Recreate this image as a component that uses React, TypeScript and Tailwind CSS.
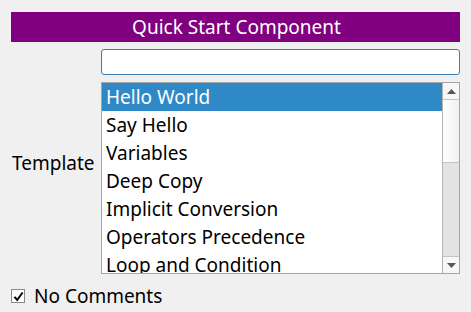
import { useState } from "react";

const templates = [
  "Hello World",
  "Say Hello",
  "Variables",
  "Deep Copy",
  "Implicit Conversion",
  "Operators Precedence",
  "Loop and Condition",
  "Functions",
  "Classes",
];

const font = { fontFamily: '"Noto Sans", "Open Sans", sans-serif' };

const App = () => {
  const [selected, setSelected] = useState(0);
  const [noComments, setNoComments] = useState(true);

  return (
    <div
      className="w-[471px] h-[312px] bg-[#f0f0f0] px-[11px] pt-[12px] text-black overflow-hidden"
      style={font}
    >
      <div className="h-[30px] bg-[#800080] text-white text-[19px] leading-[30px] text-center pl-[2px]">
        Quick Start Component
      </div>

      <div className="grid grid-cols-[90px_1fr] grid-rows-[26px_192px] gap-y-[7px] mt-[7px]">
        <div className="row-span-2 flex items-center text-[19px] pl-[1px] pt-[3px]">
          Template
        </div>
        <input
          className="h-[26px] w-full bg-white border border-[#3a7fb5] rounded-[3px] outline-none px-1 text-[16px]"
          defaultValue=""
        />
        <div className="flex h-[192px] bg-white border border-[#a6a6a6]">
          <ul className="flex-1 overflow-hidden">
            {templates.map((t, i) => (
              <li
                key={t}
                onClick={() => setSelected(i)}
                className={
                  "h-[28px] leading-[29px] pl-[4px] text-[19px] whitespace-nowrap " +
                  (i === selected ? "bg-[#2f89c7] text-white" : "text-black")
                }
              >
                {t}
              </li>
            ))}
          </ul>
          <div className="w-[17px] flex flex-col border-l border-[#b4b4b4] bg-[#e3e3e3]">
            <div className="h-[17px] bg-[#f7f7f7] border-b border-[#c4c4c4] flex items-center justify-center">
              <svg width="9" height="5" viewBox="0 0 9 5">
                <path d="M4.5 0L9 5H0z" fill="#555" />
              </svg>
            </div>
            <div className="h-[63px] bg-gradient-to-r from-white to-[#f0f0f0] border-b border-[#c4c4c4]" />
            <div className="flex-1" />
            <div className="h-[17px] bg-[#f7f7f7] border-t border-[#c4c4c4] flex items-center justify-center">
              <svg width="9" height="5" viewBox="0 0 9 5">
                <path d="M0 0H9L4.5 5z" fill="#555" />
              </svg>
            </div>
          </div>
        </div>
      </div>

      <label className="flex items-center gap-[9px] mt-[10px] text-[19px] leading-[24px] cursor-pointer">
        <span
          onClick={() => setNoComments(!noComments)}
          className="w-[14px] h-[14px] bg-white border border-[#8a8a8a] flex items-center justify-center"
        >
          {noComments && (
            <svg width="11" height="11" viewBox="0 0 11 11">
              <path d="M1.5 5.8L4.2 9L9.6 1.5" fill="none" stroke="#000" strokeWidth="2" />
            </svg>
          )}
        </span>
        No Comments
      </label>
    </div>
  );
};

export default App;
